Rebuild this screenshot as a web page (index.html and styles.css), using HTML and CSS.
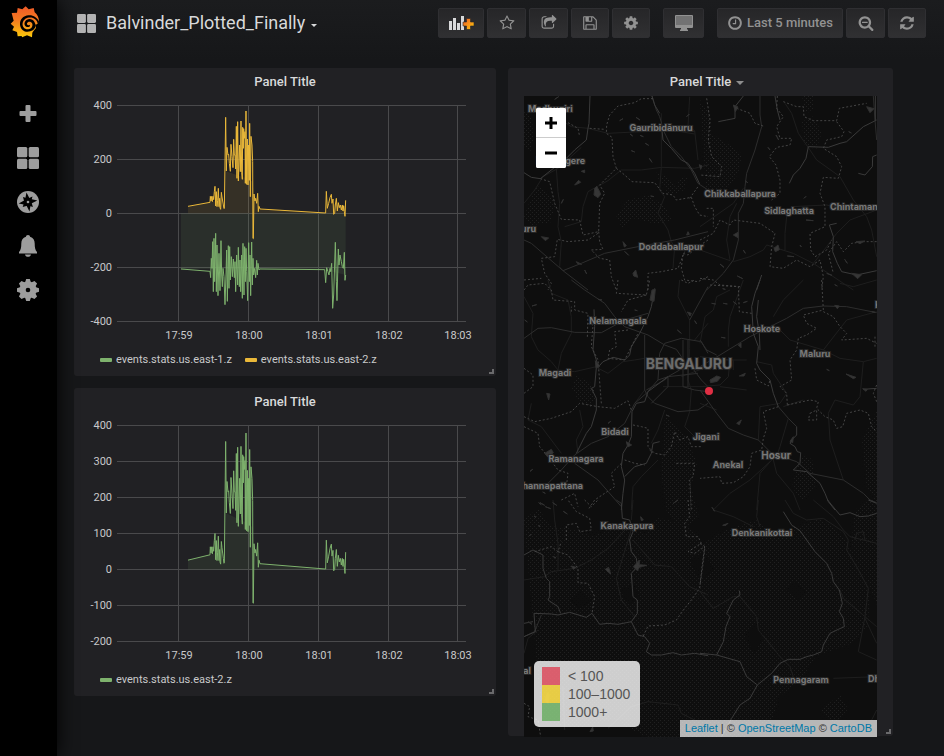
FILE: index.html
```
<!DOCTYPE html>
<html lang="en">
<head>
<meta charset="utf-8">
<title>Balvinder_Plotted_Finally</title>
<link rel="stylesheet" href="styles.css">
</head>
<body>
<svg class="defs" aria-hidden="true">
  <defs>
    <path id="east2" d="M54 334L120 322 121 304 123 318 125 304 127 320 129 304 131 314 133 290 135 274 136 300 137 333 139 290 141 335 143 316 145 280 147 335 149 310 150 338 152 343 154 292 156 306 158 318 160 330 162 341 163 340 167 67 169 228 171 157 174 180 176 178 178 205 181 229 183 148 186 185 189 218 191 133 193 180 195 180 197 222 199 94 201 250 203 80 205 258 209 150 211 230 213 78 215 232 217 253 218 97 220 160 221 101 223 130 225 110 226 265 228 48 230 268 232 132 234 270 236 150 238 256 239 85 241 305 243 124 246 150 248 200 249 430 250 431 252 297 255 318 257 310 260 325 263 295 265 350 267 334 270 342 467 354 469 289 472 340 476 325 480 308 484 298 486 325 489 312 491 358 494 355 496 330 499 310 502 348 505 323 508 338 511 330 514 345 517 330 519 348 521 332 523 350 525 364 527 316"/>
    <path id="east1" d="M33 522L120 529 122 548 124 490 126 520 128 440 130 590 132 430 134 560 137 415 139 590 141 450 144 602 147 475 150 587 153 437 155 540 157 575 159 520 162 545 165 629 168 540 170 465 172 619 175 452 177 580 179 455 181 555 184 485 187 545 190 492 193 548 195 500 197 590 200 480 203 570 205 457 208 575 210 495 212 590 215 480 217 610 219 445 222 600 224 455 226 560 228 460 230 530 233 617 236 443 238 560 240 480 242 602 245 441 247 570 249 490 251 540 254 520 257 548 260 496 262 540 264 505 267 525 269 522 464 524 467 563 470 518 474 530 477 540 480 520 482 530 485 505 488 640 491 600 496 442 499 560 501 617 505 462 507 510 510 480 514 500 517 515 520 520 523 472 525 556 527 540"/>
    <linearGradient id="flame" x1="0" y1="0" x2="0" y2="1"><stop offset="0" stop-color="#f05a28"/><stop offset=".45" stop-color="#f47b20"/><stop offset="1" stop-color="#fbca0a"/></linearGradient>
    <linearGradient id="plus" x1="0" y1="0" x2="1" y2="1"><stop offset="0" stop-color="#f05a28"/><stop offset="1" stop-color="#fbca0a"/></linearGradient>
    <symbol id="i-apps" viewBox="0 0 22 22"><rect width="10.3" height="10.3" rx="1.5"/><rect x="11.7" width="10.3" height="10.3" rx="1.5"/><rect y="11.7" width="10.3" height="10.3" rx="1.5"/><rect x="11.7" y="11.7" width="10.3" height="10.3" rx="1.5"/></symbol>
    <symbol id="i-cog" viewBox="0 0 1792 1792"><path d="M1152 896q0-106-75-181t-181-75-181 75-75 181 75 181 181 75 181-75 75-181zm512-109v222q0 12-8 23t-20 13l-185 28q-19 54-39 91 35 50 107 138 10 12 10 25t-9 23q-27 37-99 108t-94 71q-12 0-26-9l-138-108q-44 23-91 38-16 136-29 186-7 28-36 28h-222q-14 0-24.500-8.500t-11.500-21.500l-28-184q-49-16-90-37l-141 107q-10 9-25 9-14 0-25-11-126-114-165-168-7-10-7-23 0-12 8-23 15-21 51-66.500t54-70.500q-27-50-41-99l-183-27q-13-2-21-12.500t-8-23.500v-222q0-12 8-23t19-13l186-28q14-46 39-92-40-57-107-138-10-12-10-24 0-10 9-23 26-36 98.500-107.500t94.500-71.500q13 0 26 10l138 107q44-23 91-38 16-136 29-186 7-28 36-28h222q14 0 24.500 8.500t11.500 21.500l28 184q49 16 90 37l142-107q9-9 24-9 13 0 25 10 129 119 165 170 7 8 7 22 0 12-8 23-15 21-51 66.500t-54 70.500q26 50 41 98l183 28q13 2 21 12.500t8 23.500z"/></symbol>
    <pattern id="dots" width="4" height="4" patternUnits="userSpaceOnUse"><rect width="1" height="1"/><rect x="2" y="2" width="1" height="1"/></pattern>
  </defs>
</svg>
<div class="app">
  <nav class="sidebar" aria-label="Main menu">
    <a class="logo" href="#" aria-label="Home">
      <svg width="30" height="32" viewBox="31 19 90 96"><path fill="url(#flame)" d="M78 20L87 29 102 25 105 38C113 44 118 54 118 66L114 72 107 76 109 85 102 93 98 99 97 113 82 107 67 113 66 109 54 110 52 97 38 92 43 81 33 72 42 63 36 40 52 39 54 25 68 29Z"/><path d="M119 68C112 52 100 46 87 47C70 48 60 60 61 75C63 92 78 100 92 95C104 91 108 83 108 75L104 66C98 56 82 55 76 66C71 75 79 84 87 82C91 81 92 77 90 75C87 79 81 76 82 71C84 65 92 64 97 70C101 78 96 88 86 89C74 90 67 80 69 70C72 56 87 51 100 55C108 58 113 64 114 72Z"/></svg>
    </a>
    <ul class="menu">
      <li><a href="#" aria-label="Create"><svg width="22" height="22" viewBox="0 0 22 22"><path d="M9.500 2h3q1 0 1 1v5h5q1 0 1 1v3q0 1-1 1h-5v5q0 1-1 1h-3q-1 0-1-1v-5h-5q-1 0-1-1V9q0-1 1-1h5V3q0-1 1-1z"/></svg></a></li>
      <li><a href="#" aria-label="Dashboards"><svg width="22" height="22"><use href="#i-apps"/></svg></a></li>
      <li><a href="#" aria-label="Explore"><svg width="22" height="22" viewBox="0 0 22 22"><circle cx="11" cy="11" r="11"/><path fill="#000" d="M9.500 1.500l3.200 6.300 7.600 1.700-6.500 3.300L12.500 20.500 9.200 14 1.700 12.500 8 9z"/><path fill="#000" d="M15.500 5.500l-1.300 4.800 1.700 5.700-4.800-1.500-5.400 1.600 1.600-5L6 6l5 1.500z"/><circle cx="11" cy="11" r="1.300"/></svg></a></li>
      <li><a href="#" aria-label="Alerting"><svg width="22" height="22" viewBox="0 0 22 22"><path d="M11 0c1.300 0 2 .8 2 1.800 3.300 1 4.700 3.700 4.700 6.700 0 4 .5 6.500 2.300 8.500v1.500H2V17c1.800-2 2.300-4.500 2.300-8.500 0-3 1.400-5.700 4.700-6.700C9 .8 9.700 0 11 0zM8 19.500h6c-.3 1.500-1.500 2.300-3 2.300s-2.700-.8-3-2.300z"/></svg></a></li>
      <li><a href="#" aria-label="Configuration"><svg width="22" height="22" viewBox="-11 -11 22 22"><circle r="8.500"/><path id="teeth" d="M-2.800-8L-1.800-11H1.800L2.800-8V8L1.800 11H-1.800L-2.800 8z"/><use href="#teeth" transform="rotate(45)"/><use href="#teeth" transform="rotate(90)"/><use href="#teeth" transform="rotate(135)"/><circle r="2.300" fill="#000"/></svg></a></li>
    </ul>
  </nav>
  <div class="page">
    <header class="navbar">
      <a class="title" href="#"><svg width="19" height="19"><use href="#i-apps"/></svg><span>Balvinder_Plotted_Finally</span><span class="caret"></span></a>
      <div class="tools">
        <button class="btn btn-add" type="button" aria-label="Add panel"><svg width="26" height="16" viewBox="0 0 26 16"><path fill="#d8d9da" d="M1 6h3v9H1zM5 3h3v12H5zM9 8h3v7H9zM13 1h3v14h-3z"/><path fill="url(#plus)" stroke="#262628" stroke-width=".6" d="M18.500 3.500h4v3.500H26v4h-3.500v3.500h-4V11H15V7h3.500z"/></svg></button>
        <button class="btn btn-wide" type="button" aria-label="Star"><svg width="16" height="16" viewBox="0 0 1792 1792"><path d="M1201 1004l306-297-422-62-189-382-189 382-422 62 306 297-73 421 378-199 377 199zm527-357q0 22-26 48l-363 354 86 500q1 7 1 20 0 50-41 50-19 0-40-12l-449-236-449 236q-22 12-40 12-21 0-31.500-14.500t-10.500-35.500q0-6 2-20l86-500-364-354q-25-27-25-48 0-37 56-46l502-73 225-455q19-41 49-41t49 41l225 455 502 73q56 9 56 46z"/></svg></button>
        <button class="btn btn-wide" type="button" aria-label="Share"><svg width="16" height="16" viewBox="0 0 1792 1792"><path d="M1472 989v259q0 119-84.500 203.500t-203.500 84.500h-832q-119 0-203.500-84.500t-84.500-203.500v-832q0-119 84.500-203.500t203.500-84.500h255q13 0 22.500 9.500t9.500 22.500q0 27-26 32-77 26-133 60-10 4-16 4h-112q-66 0-113 47t-47 113v832q0 66 47 113t113 47h832q66 0 113-47t47-113v-214q0-19 18-28 28-13 54-37 16-16 35-8 21 9 21 29zm237-496l-384 384q-18 19-45 19-12 0-25-5-39-17-39-59v-192h-160q-323 0-438 131-119 137-74 473 3 23-20 34-8 2-12 2-16 0-26-13-10-14-21-31t-39.500-68.500-49.500-99.500-38.500-114-17.500-122q0-49 3.500-91t14-90 28-88 47-81.500 68.500-74 94.500-61.500 124.500-48.500 159.500-30.500 196.500-11h160v-192q0-42 39-59 13-5 25-5 26 0 45 19l384 384q19 19 19 45t-19 45z"/></svg></button>
        <button class="btn" type="button" aria-label="Save"><svg width="16" height="16" viewBox="0 0 1792 1792"><path d="M512 1536h768v-384h-768v384zm896 0h128v-896q0-14-10-38.500t-20-34.500l-281-281q-10-10-34-20t-39-10v416q0 40-28 68t-68 28h-576q-40 0-68-28t-28-68v-416h-128v1280h128v-416q0-40 28-68t68-28h832q40 0 68 28t28 68v416zm-384-928v-320q0-13-9.500-22.500t-22.500-9.500h-192q-13 0-22.500 9.500t-9.500 22.500v320q0 13 9.500 22.500t22.500 9.500h192q13 0 22.500-9.500t9.500-22.500zm640 32v928q0 40-28 68t-68 28h-1344q-40 0-68-28t-28-68v-1344q0-40 28-68t68-28h928q40 0 88 20t76 48l280 280q28 28 48 76t20 88z"/></svg></button>
        <button class="btn" type="button" aria-label="Settings"><svg width="16" height="16"><use href="#i-cog"/></svg></button>
        <button class="btn btn-group btn-tv" type="button" aria-label="Cycle view mode"><svg width="18" height="16" viewBox="0 0 18 16"><path fill-rule="evenodd" d="M1 0h16q1 0 1 1v11q0 1-1 1h-5v1.500h1V16H5v-1.500h1V13H1q-1 0-1-1V1q0-1 1-1zm0 1v9h16V1z"/><path opacity=".7" d="M1 1h16v9H1z"/></svg></button>
        <button class="btn btn-group btn-time" type="button"><svg width="16" height="16" viewBox="0 0 1792 1792"><path d="M1024 544v448q0 14-9 23t-23 9h-320q-14 0-23-9t-9-23v-64q0-14 9-23t23-9h224v-352q0-14 9-23t23-9h64q14 0 23 9t9 23zm416 352q0-148-73-273t-198-198-273-73-273 73-198 198-73 273 73 273 198 198 273 73 273-73 198-198 73-273zm224 0q0 209-103 385.500t-279.500 279.500-385.500 103-385.500-103-279.500-279.500-103-385.500 103-385.500 279.500-279.500 385.500-103 385.500 103 279.500 279.500 103 385.500z"/></svg><span>Last 5 minutes</span></button>
        <button class="btn btn-wide" type="button" aria-label="Zoom out"><svg width="16" height="16" viewBox="0 0 1792 1792"><path d="M1088 800v64q0 13-9.500 22.500t-22.500 9.500h-576q-13 0-22.500-9.500t-9.500-22.500v-64q0-13 9.500-22.500t22.500-9.500h576q13 0 22.500 9.500t9.500 22.500zm128 32q0-185-131.500-316.500t-316.500-131.500-316.500 131.500-131.500 316.500 131.500 316.500 316.500 131.500 316.500-131.500 131.500-316.500zm512 832q0 53-37.500 90.500t-90.500 37.500q-54 0-90-38l-343-342q-179 124-399 124-143 0-273.500-55.500t-225-150-150-225-55.500-273.500 55.500-273.500 150-225 225-150 273.500-55.500 273.500 55.500 225 150 150 225 55.500 273.500q0 220-124 399l343 343q37 37 37 90z"/></svg></button>
        <button class="btn" type="button" aria-label="Refresh"><svg width="16" height="16" viewBox="0 0 1792 1792"><path d="M1639 1056q0 5-1 7-64 268-268 434.500t-478 166.500q-146 0-282.500-55t-243.500-157l-129 129q-19 19-45 19t-45-19-19-45v-448q0-26 19-45t45-19h448q26 0 45 19t19 45-19 45l-137 137q71 66 161 102t187 36q134 0 250-65t186-179q11-17 53-117 8-23 30-23h192q13 0 22.500 9.500t9.500 22.500zm25-800v448q0 26-19 45t-45 19h-448q-26 0-45-19t-19-45 19-45l138-138q-148-137-349-137-134 0-250 65t-186 179q-11 17-53 117-8 23-30 23h-199q-13 0-22.500-9.500t-9.500-22.500v-7q65-268 270-434.500t480-166.500q146 0 284 55.500t245 156.500l130-129q19-19 45-19t45 19 19 45z"/></svg></button>
      </div>
    </header>
    <main class="board">
      <div class="column">
        <section class="panel">
          <h2>Panel Title</h2>
          <svg class="chart" viewBox="74 96 422 252">
            <g class="grid"><path d="M117 105.500H466M117 159.500H466M117 213.500H466M117 267.500H466M117 321.500H466M178.500 105V322M248.500 105V322M318.500 105V322M388.500 105V322M457.500 105V322"/></g>
            <g class="ylab"><text x="112" y="109">400</text><text x="112" y="163">200</text><text x="112" y="217">0</text><text x="112" y="271">-200</text><text x="112" y="325">-400</text></g>
            <g class="xlab"><text x="179" y="339">17:59</text><text x="249" y="339">18:00</text><text x="319" y="339">18:01</text><text x="389" y="339">18:02</text><text x="458" y="339">18:03</text></g>
            <g transform="translate(170 95) scale(.33333)">
              <path class="area green" d="M33 355V522L464 524 527 540V355Z"/>
              <path class="area yellow" d="M54 355V334L120 322 150 315 163 340 167 228 200 240 230 250 248 260 252 310 270 342 467 354 484 325 527 335V355Z"/>
              <use class="line green" href="#east1"/>
              <use class="line yellow" href="#east2"/>
            </g>
          </svg>
          <div class="legend"><a href="#"><i class="key key-green"></i>events.stats.us.east-1.z</a><a href="#"><i class="key key-yellow"></i>events.stats.us.east-2.z</a></div>
          <span class="grip"></span>
        </section>
        <section class="panel">
          <h2>Panel Title</h2>
          <svg class="chart" viewBox="74 416 422 252">
            <g class="grid"><path d="M117 425.500H466M117 461.500H466M117 497.500H466M117 533.500H466M117 569.500H466M117 605.500H466M117 641.500H466M178.500 425V642M248.500 425V642M318.500 425V642M388.500 425V642M457.500 425V642"/></g>
            <g class="ylab"><text x="112" y="429">400</text><text x="112" y="465">300</text><text x="112" y="501">200</text><text x="112" y="537">100</text><text x="112" y="573">0</text><text x="112" y="609">-100</text><text x="112" y="645">-200</text></g>
            <g class="xlab"><text x="179" y="659">17:59</text><text x="249" y="659">18:00</text><text x="319" y="659">18:01</text><text x="389" y="659">18:02</text><text x="458" y="659">18:03</text></g>
            <g transform="translate(170 411.700) scale(.33333 .44444)">
              <path class="area green" d="M54 355V334L120 322 150 315 163 340 167 228 200 240 230 250 248 260 252 310 270 342 467 354 484 325 527 335V355Z"/>
              <use class="line green" href="#east2"/>
            </g>
          </svg>
          <div class="legend"><a href="#"><i class="key key-green"></i>events.stats.us.east-2.z</a></div>
          <span class="grip"></span>
        </section>
      </div>
      <section class="panel map-panel">
        <h2>Panel Title<span class="caret caret-dim"></span></h2>
        <div class="map">
          <svg class="tiles" viewBox="524 96 353 641">
            <g fill="url(#dots)" class="forest">
              <path d="M524 112l8 4 1 24-3 12-6-6zM536 185l12 8 8 10-6 20-18 2-8-8zM616 215l12-15 20-5 18 12 6 14-16 3-24-6-10 10zM654 172l12 4 10 12 4-10 8-2-4 14-14 6zM700 100l10 14 2 20 16 10 14 10-4 20-10 14-22 2zM802 96h12v12l-8 6zM802 122l10-6 10 16-6 18-12-6zM576 376l14 6 6 16-6 10-12-8-6-12zM665 415l20 20 12 28-6 24 8 30-16 16-16-20-6-40zM862 440l10-20 5-10v90l-10-10zM800 455l12 4 4 26-14 16-10-14z"/>
              <path d="M524 520l14-12 12 18 18 2 26 8 30-14 20 12 14-16 30 6 14 20 24-14 30-10 24 16 20-10 20-8 20 14 20 30 10 30-2 36-18 16-34 12-14 22-24 20-14 22-20 20-24-6-10 24-30-16-36-6-30-16-36 8-36-6z"/>
              <path d="M855 510l22-15v110l-12-30-14-30zM736 700l24-10 18 12-10 30-30 4zM820 710l20-15 8 14-14 16z"/>
            </g>
            <g class="hollow"><path d="M744 634l12-12 8 14-10 18zM786 590l8-8 12 10-8 8zM570 600l10-10 12 10-12 8zM690 560l14-8 10 18-14 10zM620 590l14-6 6 14-12 6z"/></g>

            <g transform="translate(508 60) scale(.33333)">
              <g class="minor"><path d="M48 430L80 390 105 350 150 325 220 262M145 325L150 395 155 430 150 500 160 545 155 620 165 632M240 205L300 220 380 216 500 212 560 222M460 160V320L455 390 470 410 450 460 480 510 490 545 500 560 495 625M130 160L190 200 240 205M300 362L340 330 400 330 460 322 560 325 600 315M300 362L240 395 225 440 220 485 170 500M545 110L540 200 560 212 570 300M500 210L560 215"/></g>
              <g class="road"><path d="M48 540L70 550 165 632 240 690M165 632L220 610 290 580 390 560 500 540 600 515M432 108L445 150 455 170 468 215 490 260 520 290 550 330 570 370 600 390"/></g>
              <g class="river"><path d="M246 108L243 190 240 205 235 240 200 270 175 295 130 330 97 356 70 352 48 338M462 210L465 240 490 265 520 300 540 310 560 340 575 372M432 108L440 135 455 160"/></g>
              <g class="border"><path d="M435 116L400 116 380 128 330 138 305 165 296 195 295 220 312 232 315 290 325 325 275 375 290 400 275 430 272 515 225 525 215 480 160 478 140 430 125 365 97 356M325 325L350 345 372 365 440 368 465 400 495 405 505 420 550 412 560 440 575 465 600 470M272 515L275 545 285 568 250 570 275 595 305 600 310 650 325 690M270 520L240 540 180 545 148 538 140 590 100 595 110 640 130 670 120 690M48 660L100 655M545 415L570 380M600 540L570 560 540 585 525 580 520 625 530 660 570 665 600 650M420 690L420 640 460 635 510 625 530 575M245 205L290 208M180 188L210 205 215 230"/></g>
              <g class="lake"><path d="M260 385l6-6 8 14 4 10-8 10-12-8zM200 375l12-14 6 6-12 6zM100 530l22 4-10 8zM205 605l16 8-12-2zM375 640l8-10 6 22-12-4zM345 545l10 12-6 4zM350 574l12 12zM230 630l6 12zM220 334l10-4v8zM366 222l8 6zM370 272l10 4zM424 295l8 12zM384 172l12 8zM335 182l10-6zM396 226l10 4zM412 250l10 6zM574 314l8 4-4 10zM540 515l4 8-8 2zM428 408l10 2zM140 118l12-8zM536 170l8-8zM154 160l8-10zM160 430l6-12z"/></g>
            </g>
            <g transform="translate(700 60) scale(.33333)">
              <g class="minor"><path d="M255 130L275 160 295 220 330 270 350 300 420 350 460 420 500 470 515 510 530 590M0 500L100 430 130 385M90 600L80 540 90 470 110 430M100 605L150 590 190 570 200 555 280 580 340 610 460 690M255 570V520L260 470 275 440 380 435 450 450M340 610L380 560 410 520 450 480 530 450M0 570L90 602"/></g>
              <g class="road"><path d="M180 108V165L185 200 165 270 140 340 135 380 130 430 115 460 115 540 100 600 70 640 20 690M520 108L525 180 530 240"/></g>
              <g class="river"><path d="M130 108L105 140 105 175 80 180 55 185M530 180L490 200 440 245 420 250 385 262 325 260 318 295 300 325 280 345 268 370M526 180V108M530 285L518 290 517 320 495 345 475 340M410 490L388 495 400 530 398 575 412 610 425 635 470 645 530 632M225 108L232 150 240 180M170 690L185 645"/></g>
              <g class="border"><path d="M20 115L30 180 25 240 35 290 65 320 60 350 0 345M110 145L150 160 165 190 195 200M232 108L230 145 250 170 230 200 240 235 275 235 270 255 230 262 208 290 228 315 240 360 240 400 215 420M250 125L290 140 310 140 312 170 340 182 410 182 418 145 500 130M410 185L432 215 425 230 380 240 370 265 410 290 425 320 415 355 370 352 360 400 375 440 375 500 330 520 332 570 345 590 380 570 395 540M0 540L40 520 60 480 90 495 100 480 180 490 225 520 215 560 210 620 250 625 290 600 330 620 360 600 370 650 365 690M0 655L40 660 60 675 120 680M530 545L490 545 455 550 430 575 410 545 385 580 400 640M20 445H40V500"/></g>
              <g class="lake"><path d="M100 135l14 6-8 14zM100 525l14-8v16zM222 565l12-10 4 14-12 6zM468 545l26-2-14 8zM455 640l30 4-12 12zM300 555l4 6zM318 480l22 2zM312 415l6-6zM262 588l20 2zM60 612l12 10zM112 648l16 8zM380 640l16 6zM434 598l8 12zM135 362l8 6zM228 225l8 15zM446 215l8 4zM500 140l22 6-12 12zM130 570l6 10zM204 262l6 8z"/></g>
            </g>
            <g transform="translate(508 280) scale(.33333)">
              <g class="minor"><path d="M48 50L75 100 70 170 90 210 130 245 150 270 200 275 265 260M120 0L130 40 180 60 190 110 190 160 160 220 150 270M265 262L300 280 345 245 380 240 410 235M515 0L510 50 530 90 545 120 545 205 540 300 550 330 545 395 530 440 560 470M70 370L60 420 100 440 160 520M215 390L225 440 205 480 210 520M370 690L375 620 400 590 430 560 450 540M470 390L450 450 430 490M560 180L600 130M600 260L520 290M465 320H600M410 330L380 370"/></g>
              <g class="road"><path d="M190 0L230 30 290 70 320 110 350 140 420 165 470 195 505 208 520 230 515 270 480 290 450 300 415 340 380 370 350 430 300 470 250 490 200 525 160 570 120 610 48 620M48 175L90 145 130 143 200 157 280 158 350 120 420 100M200 550L270 600 340 680M410 165V330L420 350 440 370 510 395 570 390 600 370M450 300L455 220 470 190 520 175 580 185 600 220M525 180V320L560 330 600 335M545 120L600 20M540 180V320M415 330L470 300 480 290 570 280M480 290V320L430 370M550 260L580 300 600 320"/></g>
              <g class="river"><path d="M440 25L430 80 420 110 395 160 370 200 365 225 350 240 315 232 285 245 270 262 265 240 255 210 260 140 258 88M265 262L260 320 250 325 265 355 265 390 250 440 235 460 205 520M480 290L440 320 420 335 410 365 385 370 372 395 370 470 360 495 345 520 340 560 350 600 345 640 340 690M350 590L380 560 415 550 430 520 435 490 455 485"/></g>
              <g class="border"><path d="M48 30L60 15 110 10 130 30 135 60 200 65 200 90 240 100 238 175M190 95V80M238 130L255 135 250 200 270 240 280 370M360 150L320 155 325 200 305 210 300 235 350 240 390 160M330 0L325 40 415 45 425 0M415 45L360 60 340 95M48 265L75 285 75 320 48 340M48 410L80 425 130 415 190 395 215 370 270 380 320 385 360 362 370 390M375 435L400 440 420 445 420 500 440 520 470 525 490 500 500 455 515 480 540 470 550 500 580 500M340 550L310 580 320 620 290 640 260 660 240 690M350 540L380 550 410 555M48 440L90 460 95 500 120 530 150 570 180 580 175 620M520 0L540 10 560 0M160 660L200 640 210 680M505 550L560 550 555 590 545 600 550 690"/></g>
              <g class="lake"><path d="M432 30l10-2-4 36-12-4zM110 520l20-12 6 10-16 14zM248 325l10 8zM355 485l16 10-12 6zM425 510l10 8zM116 340l6 20 4-18zM72 78l14-4zM270 58l12 2zM538 96l12 4-4 8zM508 150l12 10zM560 122l6 10zM474 405l10 4zM300 430l8-6zM66 574l8-6zM92 668l8 6zM112 680l16 6zM380 90l8 2zM50 120l8 6zM104 636l8 4zM496 670l14-10zM262 242l14 16-12 6z"/></g>
            </g>
            <g transform="translate(700 280) scale(.33333)">
              <g class="minor"><path d="M85 200L85 150 90 110 130 0M0 190L15 110 40 90 50 50 90 30M220 110L250 60 310 0M240 150L270 180 370 210 440 120 530 95M370 210L420 235 490 245 480 350 460 375 405 360 385 400 390 480 410 540 430 600M490 245L530 235M0 370L50 390M100 270V240H60M170 245L215 255 220 280 260 340 240 370 180 380 175 480M265 415L240 500 230 530M220 540L230 580 280 640 300 690M215 540L180 580 170 690M210 545L150 600 90 640 40 690M420 10L460 20 530 0M0 230L90 240 140 240M140 330L60 320M0 320L60 315 85 290 90 240M250 380L310 360"/></g>
              <g class="road"><path d="M0 330L50 400 85 445 130 465 175 480 215 520 290 545 330 580 430 600 490 640 510 660 530 668M0 260L60 225 150 170 220 135 260 115 310 85 370 78 440 80 530 98M0 180L20 210 50 225M235 380L265 415 290 440"/></g>
              <g class="river"><path d="M180 0L165 40 155 80 160 160 175 200 170 250 180 270 210 300 220 340 235 380M175 60L170 110 178 160 180 210M290 440V465L275 480 270 490 285 500 292 515 302 518 300 550 280 570 320 575 360 610 375 640 385 665 405 690M530 325L490 328"/></g>
              <g class="border"><path d="M30 15L115 20 118 95 155 100M365 0L370 90 310 105 320 130 350 145 320 165 295 175 290 210 270 240 275 300 240 320 260 340 262 375M370 95L400 110 420 140 440 160 425 180 500 175 530 190M262 375L330 360 355 365 350 385 375 410 400 420 410 445 428 440 440 400 480 390 505 400 515 440 530 455M330 400L350 390 350 420 325 420ZM235 380L190 395 200 445 190 475 185 510 155 520 150 560 130 590 100 608 65 610 60 590 0 595M165 265L170 300 205 318 210 300M530 315L520 340 530 365M525 170V200"/></g>
              <g class="lake"><path d="M30 300l20-12 12 4-10 12-20 4zM118 288l18-8-4 8zM110 430l14-10-6 14zM115 195l8-6v14zM404 14l8 4zM64 172l12 2zM404 76l14 2-6 8zM380 268l8 4zM438 282l30 10-8 4zM70 70l12 2zM35 70l12 2zM130 68l12-4zM280 470l-10 14 8 4zM68 26l8 2zM488 326l14 2-4 6zM100 65l10 8zM515 95l10 2z"/></g>
            </g>
            <g transform="translate(508 500) scale(.33333)">
              <g class="minor"><path d="M48 240L110 230 130 215 200 205 250 180 300 145 360 80M370 90L345 170 325 235 340 300 380 350M375 120L440 195 490 200 545 260 600 285M48 460L60 415 90 390M135 0L140 60 150 130 150 210M300 685L370 620 420 605 510 615 520 640 560 660M375 0L370 60M165 560L170 690"/></g>
              <g class="road"><path d="M325 0L340 10M48 410L80 395 100 345"/></g>
              <g class="river"><path d="M340 10L343 55 365 60 375 95 365 120 370 155 385 175 388 200 370 220 375 290 388 300 388 340 370 365 330 373 300 370 275 373 252 340 235 352 185 337 150 345 130 342 78 340 82 395 48 410M48 165L75 150 105 165 105 205 115 235 125 245 125 290 120 300 150 320 158 340M370 365L390 405 410 410 425 430 415 455 430 465 460 465 495 458 520 465 560 460 600 467M48 370L75 365"/></g>
              <g class="border"><path d="M540 0L545 50 530 70 535 110 570 110 580 130 540 155 560 160 590 140 582 200 575 265 550 300 530 325 505 360 470 375 420 378 405 410M150 155L180 165 210 205 210 248 240 250 260 290 252 340M80 155L130 140 150 155 160 125M175 120V75L205 70 215 95 250 90 245 55 205 35 180 0M48 610L65 620 60 650 90 660 98 710M230 0L250 20 270 0"/></g>
              <g class="lake"><path d="M292 208l10-6 6 20-8-6zM376 200l18-20v14l22 2-22 6-6 10zM398 50l8 10-6 2zM166 34l12 8zM134 8l12 8zM78 48l6 4zM136 170l8 4zM190 198l14 4-8 6zM246 695l8-14 2 12zM64 108l6-6zM92 75l4 6zM112 600l6-22 6 6-4 28zM96 8l14 8zM60 365l12 8z"/></g>
            </g>
            <g transform="translate(700 500) scale(.33333)">
              <g class="minor"><path d="M40 30L100 50 160 80M175 0L170 50 180 80M255 0L280 40 320 60 370 55 430 95 445 120 440 150 470 200 505 265 495 350 475 455 530 480M340 0L400 50 430 90 450 110 530 130M465 120L470 100 490 95 495 120M0 275L40 325 100 290 120 290 170 350 175 390 200 420 240 470 270 500 280 530M420 270L430 295 495 350 530 380M495 355L530 430M400 535L530 530M530 630L515 660M230 540L360 540"/></g>
              <g class="river"><path d="M383 0L395 15 420 45 450 38 480 50 505 48 530 40M250 35L275 75 300 92 345 155 380 190 395 220 400 245 418 270 427 310 418 335 430 355 433 380 415 388 390 400 370 435 365 455 340 465 320 470 300 478 265 478 240 490 215 520 172 555 150 595 120 615 95 655 65 710M0 460L50 465 120 485 140 530 172 555M50 465L70 425 78 380 90 350 80 340 100 300 120 285 118 272M505 0L530 10"/></g>
              <g class="border"><path d="M0 130L15 140 8 200 0 255"/></g>
              <g class="lake"><path d="M68 76l16-6-6 6zM36 22l8 12zM275 75l10 8z"/></g>
            </g>

            <g class="place">
              <text x="528" y="112">Madhugiri</text><text x="661" y="131" text-anchor="middle">Gauribidānuru</text><text x="585" y="164" text-anchor="end">Koratagere</text><text x="536" y="232" text-anchor="end">Tumakuru</text>
              <text x="671" y="250" text-anchor="middle">Doddaballapur</text><text x="740" y="197" text-anchor="middle">Chikkaballapura</text><text x="789" y="214" text-anchor="middle">Sidlaghatta</text><text x="830" y="210">Chintamani</text>
              <text x="618" y="324" text-anchor="middle">Nelamangala</text><text x="555" y="376" text-anchor="middle">Magadi</text><text class="city" x="689" y="369" text-anchor="middle">BENGALURU</text><text x="762" y="332" text-anchor="middle">Hoskote</text><text x="815" y="357" text-anchor="middle">Maluru</text><text x="875" y="308">Kolar</text>
              <text x="615" y="435" text-anchor="middle">Bidadi</text><text x="706" y="440" text-anchor="middle">Jigani</text><text class="town" x="776" y="459" text-anchor="middle">Hosur</text><text x="728" y="468" text-anchor="middle">Anekal</text><text x="576" y="462" text-anchor="middle">Ramanagara</text><text x="583" y="489" text-anchor="end">Channapattana</text>
              <text x="627" y="529" text-anchor="middle">Kanakapura</text><text x="762" y="536" text-anchor="middle">Denkanikottai</text><text x="801" y="683" text-anchor="middle">Pennagaram</text><text x="868" y="682">Dharmapuri</text><text x="531" y="674" text-anchor="end">Kollegal</text>
            </g>
            <circle cx="709" cy="391" r="4" fill="#e02f44"/>
          </svg>
          <div class="zoom"><button type="button" aria-label="Zoom in"><svg width="12" height="12"><path d="M0 6H12M6 0V12"/></svg></button><button type="button" aria-label="Zoom out"><svg width="12" height="12"><path d="M0 6H12"/></svg></button></div>
          <ul class="scale"><li><i class="sw sw-red"></i>&lt; 100</li><li><i class="sw sw-yellow"></i>100–1000</li><li><i class="sw sw-green"></i>1000+</li></ul>
          <div class="credit"><a href="#">Leaflet</a> | © <a href="#">OpenStreetMap</a> © <a href="#">CartoDB</a></div>
        </div>
        <span class="grip"></span>
      </section>
    </main>
  </div>
</div>
</body>
</html>
```
FILE: styles.css
```
* { box-sizing: border-box; }
body { margin: 0; background: #161719; color: #d8d9da; font: 13px/20px Roboto, "Liberation Sans", sans-serif; }
a { color: inherit; text-decoration: none; }
ul { list-style: none; margin: 0; padding: 0; }
svg { display: block; }
.defs { position: absolute; width: 0; height: 0; }

.app { display: flex; min-height: 100vh; }
.sidebar { flex: none; width: 57px; background: #000; box-shadow: 0 0 20px #000; z-index: 1; }
.logo { display: flex; justify-content: center; padding: 6px 8px 0 0; height: 92px; }
.menu a { display: flex; align-items: center; justify-content: center; height: 44px; padding-right: 1px; fill: #9d9d9d; }
.menu svg { flex: none; }

.page { flex: 1; min-width: 0; padding: 0 51px 20px 17px; background: linear-gradient(#1b1c1e, #161719 60px); }
.navbar { display: flex; align-items: center; justify-content: space-between; height: 46px; margin-right: -33px; padding-left: 3px; margin-bottom: 22px; }
.title { display: flex; align-items: center; gap: 10px; font-size: 18px; fill: #b3b3b3; white-space: nowrap; }
.caret { border: 3px solid transparent; border-top-color: currentColor; border-bottom: 0; margin: 4px 0 0 -4px; }
.tools { display: flex; gap: 3px; }
.btn { display: flex; align-items: center; justify-content: center; gap: 4px; width: 38px; height: 30px; padding: 0; border: 1px solid #2f2f32; border-radius: 2px; background: linear-gradient(#262628, #303032); color: #929292; fill: #929292; font: 500 13px/20px Roboto, "Liberation Sans", sans-serif; white-space: nowrap; }
.btn svg { flex: none; }
.btn-wide { width: 39px; }
.btn-add { width: 46px; }
.btn-tv { width: 41px; }
.btn-time { width: 126px; }
.btn-group { margin-left: 10px; }

.board { display: grid; grid-template-columns: 422fr 385fr; gap: 12px; align-items: start; }
.column { display: grid; gap: 12px; }
.panel { position: relative; background: #212124; border-radius: 3px; padding-bottom: 6px; }
.panel h2 { margin: 0; height: 28px; font-size: 13px; line-height: 28px; font-weight: 500; text-align: center; }
.caret-dim { display: inline-block; border-width: 4px; border-bottom: 0; border-top-color: #8e8e8e; margin: 0 -13px 1px 5px; }
.chart { width: 100%; height: auto; font-size: 11px; fill: #c8c9ca; }
.grid path { stroke: #4a4a4c; fill: none; }
.ylab { text-anchor: end; }
.xlab { text-anchor: middle; }
.line { fill: none; stroke-width: 1px; }
.line.green { stroke: #7eb26d; }
.line.yellow { stroke: #eab839; }
#east1, #east2 { vector-effect: non-scaling-stroke; }
.area { fill-opacity: .1; }
.area.green { fill: #7eb26d; }
.area.yellow { fill: #eab839; }
.legend { display: flex; gap: 13px; padding: 2px 26px 0; height: 22px; font-size: 11px; line-height: 20px; color: #c8c9ca; }
.legend a { display: flex; align-items: center; gap: 4px; }
.key { width: 12px; height: 4px; border-radius: 1px; }
.key-green { background: #7eb26d; }
.key-yellow { background: #eab839; }
.grip { position: absolute; right: 2px; bottom: 2px; width: 5px; height: 5px; border: solid #6a6a6c; border-width: 0 2px 2px 0; }

.map-panel { padding: 0 16px; }
.map { position: relative; margin-bottom: -1px; background: #0e0e0e; overflow: hidden; color: #333; }
.tiles { width: 100%; height: auto; }
.tiles path { vector-effect: non-scaling-stroke; }
#dots rect { fill: #202020; }
.hollow { fill: #0e0e0e; }
.minor path, .road path, .river path, .border path { fill: none; }
.minor { stroke: #1e1e1e; }
.road { stroke: #2d2d2d; }
.river { stroke: #3a3a3a; stroke-linejoin: round; }
.border { stroke: #444; stroke-dasharray: 2 2; }
.lake { fill: #363636; stroke: #303030; }
.place { font: 700 9px Inter, "Open Sans", sans-serif; fill: #787878; stroke: #262626; stroke-width: 2px; paint-order: stroke; }
.town { font-size: 10px; }
.city { font-size: 14px; fill: #6c6c6c; }

.zoom { position: absolute; left: 12px; top: 12px; width: 30px; border-radius: 2px; overflow: hidden; background: #fff; }
.zoom button { display: flex; align-items: center; justify-content: center; width: 30px; height: 30px; padding: 0; border: 0; background: #fff; stroke: #000; stroke-width: 2px; }
.zoom path { stroke-width: 3px; }
.zoom button:first-child { border-bottom: 1px solid #ccc; }
.scale { position: absolute; left: 10px; bottom: 10px; padding: 6px 10px 6px 8px; border-radius: 5px; background: rgba(255, 255, 255, .8); color: #555; font: 14px/18px "Liberation Sans", sans-serif; }
.scale li { display: flex; gap: 8px; }
.sw { width: 18px; height: 18px; opacity: .7; }
.sw-red { background: #e02f44; }
.sw-yellow { background: #f2cc0c; }
.sw-green { background: #56a64b; }
.credit { position: absolute; right: 0; bottom: 0; padding: 0 5px; background: rgba(255, 255, 255, .7); font: 11px/17px "Liberation Sans", sans-serif; white-space: nowrap; }
.credit a { color: #0078a8; }
```
